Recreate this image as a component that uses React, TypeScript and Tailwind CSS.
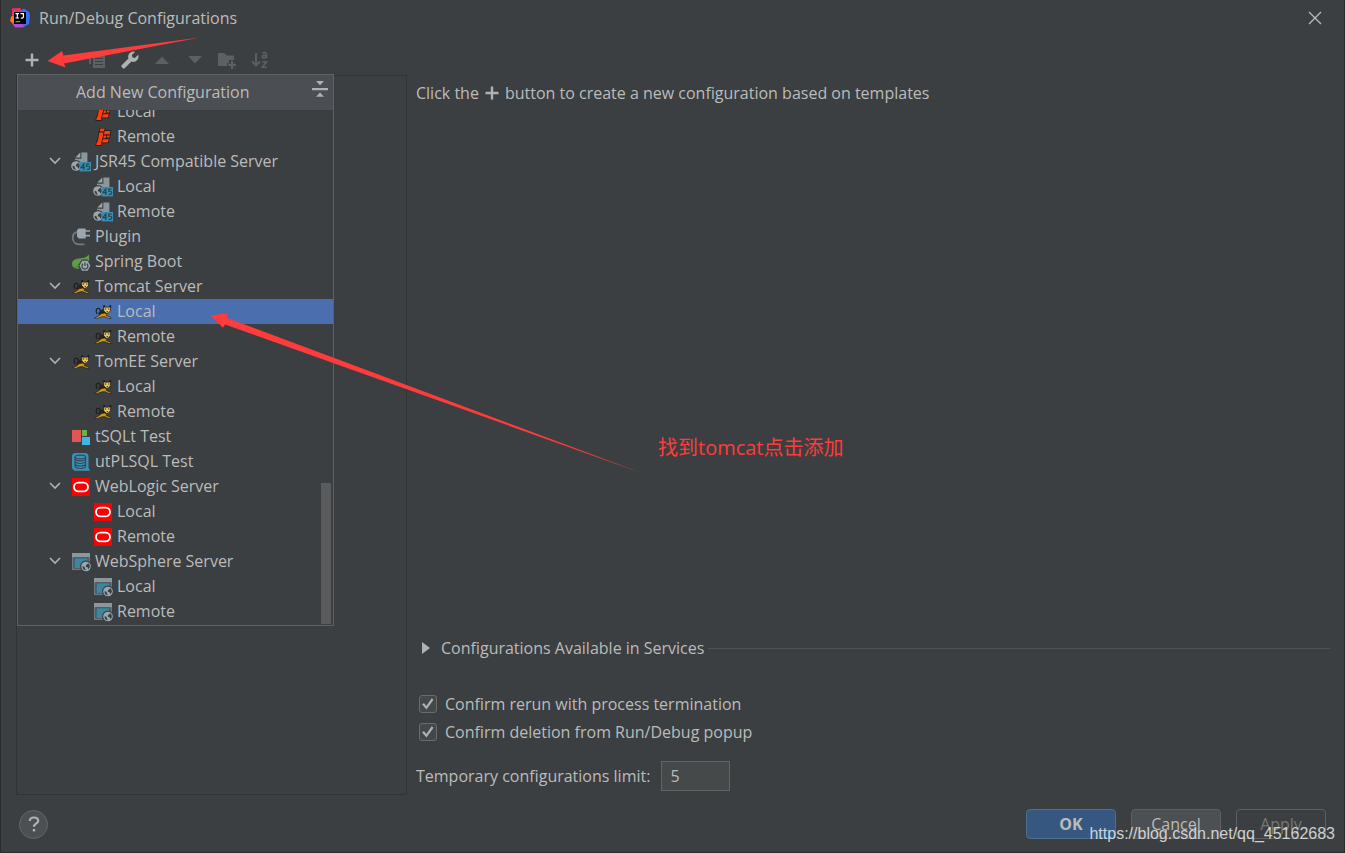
import React, { useState } from 'react';

type IconName =
  | 'jboss'
  | 'jsr45'
  | 'plugin'
  | 'spring'
  | 'tomcat'
  | 'tsqlt'
  | 'utplsql'
  | 'weblogic'
  | 'websphere';

interface TreeItem {
  id: string;
  label: string;
  icon: IconName;
  child?: boolean;
  group?: boolean;
}

const treeItems: TreeItem[] = [
  { id: 'jboss-local', label: 'Local', icon: 'jboss', child: true },
  { id: 'jboss-remote', label: 'Remote', icon: 'jboss', child: true },
  { id: 'jsr45', label: 'JSR45 Compatible Server', icon: 'jsr45', group: true },
  { id: 'jsr45-local', label: 'Local', icon: 'jsr45', child: true },
  { id: 'jsr45-remote', label: 'Remote', icon: 'jsr45', child: true },
  { id: 'plugin', label: 'Plugin', icon: 'plugin' },
  { id: 'spring', label: 'Spring Boot', icon: 'spring' },
  { id: 'tomcat', label: 'Tomcat Server', icon: 'tomcat', group: true },
  { id: 'tomcat-local', label: 'Local', icon: 'tomcat', child: true },
  { id: 'tomcat-remote', label: 'Remote', icon: 'tomcat', child: true },
  { id: 'tomee', label: 'TomEE Server', icon: 'tomcat', group: true },
  { id: 'tomee-local', label: 'Local', icon: 'tomcat', child: true },
  { id: 'tomee-remote', label: 'Remote', icon: 'tomcat', child: true },
  { id: 'tsqlt', label: 'tSQLt Test', icon: 'tsqlt' },
  { id: 'utplsql', label: 'utPLSQL Test', icon: 'utplsql' },
  { id: 'weblogic', label: 'WebLogic Server', icon: 'weblogic', group: true },
  { id: 'weblogic-local', label: 'Local', icon: 'weblogic', child: true },
  { id: 'weblogic-remote', label: 'Remote', icon: 'weblogic', child: true },
  { id: 'websphere', label: 'WebSphere Server', icon: 'websphere', group: true },
  { id: 'websphere-local', label: 'Local', icon: 'websphere', child: true },
  { id: 'websphere-remote', label: 'Remote', icon: 'websphere', child: true },
];

const Globe: React.FC<{ x: number; y: number }> = ({ x, y }) => (
  <g transform={`translate(${x} ${y})`}>
    <circle cx="5" cy="5" r="6" fill="#3c3f41" />
    <circle cx="5" cy="5" r="4.8" fill="#9aa7b0" />
    <path d="M1.600 4.400l2 1 .4 1.600 1 1.800C2.800 8.800 1.200 7 1.600 4.400zM5 3.800l2.200-2C8.800 3 9 4.400 8.800 5.800l-1.600 2-.6-2-1.800-.6z" fill="#3c3f41" />
  </g>
);

const TreeIcon: React.FC<{ name: IconName }> = ({ name }) => {
  switch (name) {
    case 'jboss':
      return (
        <svg viewBox="0 0 20 20" className="h-5 w-5">
          <g fill="#ff3d0d" stroke="#1c1c1c" strokeWidth="1.400" paintOrder="stroke">
            <path d="M7.400 1.600h4.400l-.7 3H6.600z" />
            <path d="M6.200 5.400h4.800L8.200 18H3.200l.8-3.400h.8z" />
            <path d="M11.600 4h5.900l-.8 3.400h-5.800z" />
            <path d="M10.800 8.400h2.400l-.6 3.200h-2.400z" />
            <path d="M14 8.400h2.800l-.5 2.200h-2.800z" />
            <path d="M9.800 12.200h6l-.8 3.400H9z" />
          </g>
        </svg>
      );
    case 'jsr45':
      return (
        <svg viewBox="0 0 20 20" className="h-5 w-5">
          <path d="M9.300.600v4.900H4.400z" fill="#9aa7b0" />
          <path d="M10.400.600h6v9.400H4V6.700h6.400z" fill="#8b979f" />
          <Globe x={0} y={9} />
          <rect x="8.600" y="10" width="11.400" height="9.400" fill="#3b8daf" />
          <path d="M12.800 18v-6.200L9.900 15.700h4M18.600 12.100h-2.900v2.200c2.400-.3 3 .4 3 1.500 0 1.400-1.200 1.800-3 1.400" fill="none" stroke="#24485a" strokeWidth="1.200" />
        </svg>
      );
    case 'plugin':
      return (
        <svg viewBox="0 0 20 20" className="h-5 w-5">
          <path d="M6 5C2.600 5.800 1.600 8.600 1.800 11.400c.3 3.600 3 6 6.600 6h5" fill="none" stroke="#6e787f" strokeWidth="1.800" />
          <path d="M6 3l1.800-1.600h6.800v10H7.800L6 9.600z" fill="#9aa7b0" />
          <path d="M14 3.200h5v1.600h-5zM14 7.800h5v1.600h-5z" fill="#9aa7b0" />
        </svg>
      );
    case 'spring':
      return (
        <svg viewBox="0 0 20 20" className="h-5 w-5">
          <path d="M17.800 2.400c.9 4 .8 9-2.800 12.400-3 2-7.600 2.400-10.400 1.600C1.800 15.800.8 13.400 1 11.400 1.800 6.600 6.800 6.800 11 6c3-.4 5.400-1.600 6.800-3.600z" fill="#5c9e45" />
          <path d="M3.200 15.400c4-.4 8-2.400 10.600-6.600" fill="none" stroke="#3d6e30" strokeWidth=".8" />
          <path d="M11 7.400h5.600l3.400 5v3l-3.400 4.600h-5.800l-3.200-4.800v-3z" fill="#3c3f41" />
          <path d="M11.200 8.800h5.400l2.800 4.900-2.800 5h-5.400l-2.800-5z" fill="#9aa7b0" />
          <path d="M12 11.800a3 3 0 1 0 3.800 0M13.900 10.400v3.600" fill="none" stroke="#3c3f41" strokeWidth="1.200" />
        </svg>
      );
    case 'tomcat':
      return (
        <svg viewBox="0 0 20 20" className="h-5 w-5">
          <path d="M4.200 12C2.200 9.400 3.200 6 5.600 6.200c1.600.2 2 1.800 1.200 3" fill="none" stroke="#17191a" strokeWidth="1.100" />
          <path d="M5 11.600l3-3.600 3.200-1.400 3.600 3.200-1.200 2.800-3.200.6-3.400.2z" fill="#2a2412" />
          <path d="M1.500 16l4.500-2.200 2-2 3.400-.8 2.500 1.200-.8 1.200 4.500 1.800.4 1.400-3-.5-3.600-1.600-3.400.6-3.200 1.300z" fill="#d0981a" stroke="#17191a" strokeWidth=".6" />
          <path d="M10.600 4l2 1.200h2.800L17.800 4l-.4 4.800-2.500 2.600h-1.600L10.800 8.800z" fill="#e8c766" stroke="#17191a" strokeWidth=".7" />
          <path d="M10.300 3.200h1.500l.6 1.800-1.800.7zM18.200 3.200h-1.500l-.8 1.800 1.800.7zM12 6.500h1.200v1.100H12zM15.200 6.500h1.200v1.100h-1.200zM13.600 9.200h1.400v1h-1.400z" fill="#17191a" />
        </svg>
      );
    case 'tsqlt':
      return (
        <svg viewBox="0 0 20 20" className="h-5 w-5">
          <rect x="1" y="3" width="9" height="12" fill="#e05555" />
          <rect x="11" y="3" width="5" height="6" fill="#62b543" />
          <rect x="11" y="10" width="8" height="8" fill="#40b6e0" />
        </svg>
      );
    case 'utplsql':
      return (
        <svg viewBox="0 0 20 20" className="h-5 w-5">
          <path d="M4.500 1h9.500A3.500 3.500 0 0 1 17.500 4.500v11l1.500 3.200H5A4 4 0 0 1 1 15V4.500A3.500 3.500 0 0 1 4.500 1z" fill="#3b91b5" />
          <g fill="none" stroke="#31485a" strokeWidth="1.100">
            <ellipse cx="9.300" cy="5" rx="5.300" ry="1.900" />
            <path d="M4 7.200c1.600 2.200 9 2.200 10.600 0M4 9.800c1.600 2.200 9 2.200 10.600 0M4 12.400c1.600 2.200 9 2.200 10.600 0M4 5v9.800c1.600 2.200 9 2.200 10.600 0V5" />
          </g>
        </svg>
      );
    case 'weblogic':
      return (
        <svg viewBox="0 0 20 20" className="h-5 w-5">
          <rect x="1" y="1" width="18" height="18" fill="#fb0000" />
          <rect x="3" y="5.600" width="14" height="8.800" rx="4.400" fill="none" stroke="#fff" strokeWidth="1.900" />
        </svg>
      );
    case 'websphere':
      return (
        <svg viewBox="0 0 20 20" className="h-5 w-5">
          <rect x="1" y="1" width="18" height="4" fill="#8b979f" />
          <path d="M1 5h18v13H1z" fill="#6e787f" />
          <path d="M2.500 5.500h15v11h-15z" fill="#3c3f41" />
          <rect x="3.400" y="6.200" width="13.200" height="9.800" fill="#3e86a0" />
          <Globe x={10} y={9.500} />
        </svg>
      );
    default:
      return null;
  }
};

const PlusIcon = () => (
  <svg viewBox="0 0 14 14" className="h-[14px] w-[14px]">
    <path d="M5.800.5h2.400v5.300h5.300v2.400H8.200v5.300H5.800V8.200H.5V5.800h5.300z" fill="#afb1b3" />
  </svg>
);

const AppLogo = () => (
  <svg viewBox="0 0 20 20" className="h-5 w-5">
    <path d="M1 9l2-3 4 0v9l-3 1.500L0 13z" fill="#fc7a1e" />
    <path d="M2 .5L10 0l3 4-6 6-5-2z" fill="#f02f6a" />
    <path d="M10 3l4-2.500L19 4l1 3-1 9-6 3.500-5-1z" fill="#3a6df0" />
    <path d="M2 15l8-2 4 5-2 1.500H5z" fill="#b24ad8" />
    <rect x="4" y="4" width="12" height="12" fill="#000" />
    <path d="M5.500 5.600h3.600M7.300 5.600v4.400M5.500 10h3.600M10.400 5.600h3v3.200c0 1-.8 1.400-2.600 1.200" fill="none" stroke="#fff" strokeWidth="1.200" />
    <path d="M5.500 13.700h4.500" stroke="#aaa" strokeWidth="1" />
  </svg>
);

const toolbar = [
  { label: 'Add', icon: <PlusIcon /> },
  {
    label: 'Remove',
    icon: (
      <svg viewBox="0 0 14 14" className="h-[14px] w-[14px]">
        <path d="M2 6h10v2H2z" fill="#5d6062" />
      </svg>
    ),
  },
  {
    label: 'Copy',
    icon: (
      <svg viewBox="0 0 18 18" className="h-[18px] w-[18px]">
        <path d="M1 1h11v1.800H3V13H1z" fill="#5d6062" />
        <path d="M5 4h12v13H5z" fill="#5d6062" />
        <path d="M7 7.500h8M7 10.500h8M7 13.500h8" stroke="#3c3f41" strokeWidth="1" />
      </svg>
    ),
  },
  {
    label: 'Edit templates',
    icon: (
      <svg viewBox="0 0 18 18" className="h-[18px] w-[18px]">
        <path d="M14.200.8a5.200 5.200 0 0 0-6.700 6.700L.7 14.300a1.300 1.300 0 0 0 0 1.800l1.200 1.200a1.300 1.300 0 0 0 1.800 0l6.800-6.800a5.200 5.200 0 0 0 6.700-6.700l-3.300 3.300-2.400-.6-.6-2.400z" fill="#afb1b3" />
      </svg>
    ),
  },
  {
    label: 'Move up',
    icon: (
      <svg viewBox="0 0 16 16" className="h-4 w-4">
        <path d="M1 12 8 4.500 15 12z" fill="#5d6062" />
      </svg>
    ),
  },
  {
    label: 'Move down',
    icon: (
      <svg viewBox="0 0 16 16" className="h-4 w-4">
        <path d="M1 4h14l-7 7.500z" fill="#5d6062" />
      </svg>
    ),
  },
  {
    label: 'Create folder',
    icon: (
      <svg viewBox="0 0 18 18" className="h-[18px] w-[18px]">
        <path d="M0 2h6.500l2 2.500H16V9h-5v3H9v3H0z" fill="#5d6062" />
        <path d="M13 10h2.200v2.800H18V15h-2.800v3H13v-3h-2.800v-2.200H13z" fill="#5d6062" />
      </svg>
    ),
  },
  {
    label: 'Sort configurations',
    icon: (
      <svg viewBox="0 0 18 18" className="h-[18px] w-[18px]" fill="none" stroke="#5d6062">
        <path d="M5 2v12M1 10.500l4 4 4-4" strokeWidth="1.900" />
        <path d="M11.500 2.200c1.600-1 3.900-.6 3.900 1v3.800M15.400 4.200c-2.800 0-4.200.3-4.200 1.500 0 1.600 3 1.500 4.200 0M11.300 10.800h4.200l-4.200 5.500h4.600" strokeWidth="1.600" />
      </svg>
    ),
  },
];

interface CheckboxProps {
  id: string;
  label: string;
}

const Checkbox: React.FC<CheckboxProps> = ({ id, label }) => {
  const [checked, setChecked] = useState(true);

  return (
    <div className="flex h-7 items-center pl-[3px]">
      <span className="mr-2 grid">
        <input
          id={id}
          type="checkbox"
          checked={checked}
          onChange={(e) => setChecked(e.target.checked)}
          className="col-start-1 row-start-1 h-[18px] w-[18px] appearance-none rounded-[3px] border border-[#6b6b6b] bg-[#43494a]"
        />
        {checked && (
          <svg viewBox="0 0 18 18" className="pointer-events-none col-start-1 row-start-1 h-[18px] w-[18px]">
            <path d="M4 8.800l3.400 4L13.600 4" fill="none" stroke="#afb1b3" strokeWidth="2.200" />
          </svg>
        )}
      </span>
      <label htmlFor={id}>{label}</label>
    </div>
  );
};

const NewConfigurationPopup = () => {
  const [selected, setSelected] = useState('tomcat-local');

  return (
    <div className="absolute -top-[2px] left-0 flex w-[317px] flex-col border border-[#616161] bg-[#3c3f41]">
      <div className="flex h-[35px] items-start bg-[#4b4e52] pt-[5px] pr-[5px]">
        <h2 className="flex-1 pl-[58px]">Add New Configuration</h2>
        <button aria-label="Collapse all">
          <svg viewBox="0 0 16 18" className="h-[18px] w-4">
            <path d="M4 1h8L8 5.200zM0 8h16v2.200H0zM8 12.500l4 4.200H4z" fill="#afb1b3" />
          </svg>
        </button>
      </div>
      <div className="relative flex h-[515px] flex-col justify-end overflow-hidden pb-px">
        {treeItems.map((item) => (
          <button
            key={item.id}
            onClick={() => setSelected(item.id)}
            className={`flex h-[25px] w-full shrink-0 items-start pl-[31px] text-left ${
              selected === item.id ? 'bg-[#4b6eaf]' : ''
            }`}
          >
            <span className={item.child ? 'mt-[6px] mr-8 w-3' : 'mt-[6px] mr-[10px] w-3'}>
              {item.group && (
                <svg viewBox="0 0 12 12" className="h-3 w-3">
                  <path d="M1 3l5 5 5-5" fill="none" stroke="#afb1b3" strokeWidth="1.600" />
                </svg>
              )}
            </span>
            <span className="mt-[3px] mr-1">
              <TreeIcon name={item.icon} />
            </span>
            {item.label}
          </button>
        ))}
        <div className="absolute right-[2px] bottom-px h-[141px] w-[10px] bg-[#5a5b5c]" />
      </div>
    </div>
  );
};

const App: React.FC = () => {
  const [limit, setLimit] = useState('5');

  return (
    <div className="relative flex min-h-screen flex-col border-x border-b border-[#2b2b2b] bg-[#3c3f41] font-['Open_Sans','Noto_Sans_CJK_SC',sans-serif] text-base leading-6 text-[#bbbbbb]">
      <header className="flex h-9 items-center pr-[22px] pl-[9px]">
        <AppLogo />
        <h1 className="flex-1 pl-[9px]">Run/Debug Configurations</h1>
        <button aria-label="Close">
          <svg viewBox="0 0 14 14" className="h-[14px] w-[14px]">
            <path d="M1 1l12 12M13 1 1 13" stroke="#bbbbbb" strokeWidth="1.300" />
          </svg>
        </button>
      </header>

      <main className="flex flex-1 pt-[9px]">
        <section className="flex w-[406px] shrink-0 flex-col pl-[15px]">
          <div className="flex h-[30px] w-[260px] items-center justify-between">
            {toolbar.map((action) => (
              <button key={action.label} aria-label={action.label} className="flex h-7 w-8 items-center justify-center">
                {action.icon}
              </button>
            ))}
          </div>
          <div className="relative flex-1 border border-[#313335]">
            <NewConfigurationPopup />
          </div>
        </section>

        <section className="flex flex-1 flex-col pr-[14px] pb-1 pl-[9px]">
          <p className="flex items-center pt-9">
            Click the
            <span className="mx-[6px]">
              <PlusIcon />
            </span>
            button to create a new configuration based on templates
          </p>

          <button className="mt-auto flex h-6 items-center text-left">
            <svg viewBox="0 0 8 12" className="mr-[11px] ml-[6px] h-3 w-2">
              <path d="M0 0l8 6-8 6z" fill="#afb1b3" />
            </svg>
            Configurations Available in Services
            <span className="ml-1 h-px flex-1 bg-[#515151]" />
          </button>

          <div className="mt-[30px]">
            <Checkbox id="confirm-rerun" label="Confirm rerun with process termination" />
            <Checkbox id="confirm-deletion" label="Confirm deletion from Run/Debug popup" />
          </div>

          <div className="mt-[15px] flex items-center">
            <label htmlFor="limit" className="mr-[11px]">
              Temporary configurations limit:
            </label>
            <input
              id="limit"
              type="text"
              value={limit}
              onChange={(e) => setLimit(e.target.value)}
              className="h-[30px] w-[69px] border border-[#646464] bg-[#45494a] px-2"
            />
          </div>
        </section>
      </main>

      <footer className="flex items-center gap-[15px] pt-[14px] pr-[18px] pb-[13px] pl-[18px]">
        <button
          aria-label="Help"
          className="mr-auto flex h-[29px] w-[29px] items-center justify-center rounded-full border border-[#63676a] bg-[#4c5052]"
        >
          <svg viewBox="0 0 12 16" className="h-4 w-3">
            <path d="M1.800 5C1.800 2.600 3.600 1.500 6 1.500s4.200 1.200 4.200 3.400C10.200 7.500 6 7.500 6 10.800" fill="none" stroke="#afb1b3" strokeWidth="2.200" />
            <path d="M4.800 13h2.400v2.400H4.800z" fill="#afb1b3" />
          </svg>
        </button>
        <button className="h-[30px] w-[90px] rounded border border-[#4c708c] bg-[#365880] font-bold">OK</button>
        <button className="h-[30px] w-[90px] rounded border border-[#5e6060] bg-[#4c5052]">Cancel</button>
        <button className="h-[30px] w-[90px] rounded border border-[#5e6060] text-[#777777]">Apply</button>
      </footer>

      {/* annotation layer */}
      <svg
        viewBox="0 0 660 490"
        className="pointer-events-none absolute top-0 -left-px h-[490px] w-[660px]"
        fill="#ff3b3b"
      >
        <path d="M47.500 61L62 51l1.500 4.500L200 37.500 64 63.500l1.500 4z" />
        <path d="M210.500 315.500L228 313.200l-1 4.800 106 39.500L643 473.500 333 363 225 324.500l-2 3.200z" />
      </svg>
      <p className="absolute top-[436px] left-[657px] text-xl leading-6 text-[#ff3b3b]">找到tomcat点击添加</p>
      <p className="absolute right-[9px] bottom-[6px] font-['Liberation_Sans',Arial,sans-serif] text-base text-white/75">
        https://blog.csdn.net/qq_45162683
      </p>
    </div>
  );
};

export default App;
